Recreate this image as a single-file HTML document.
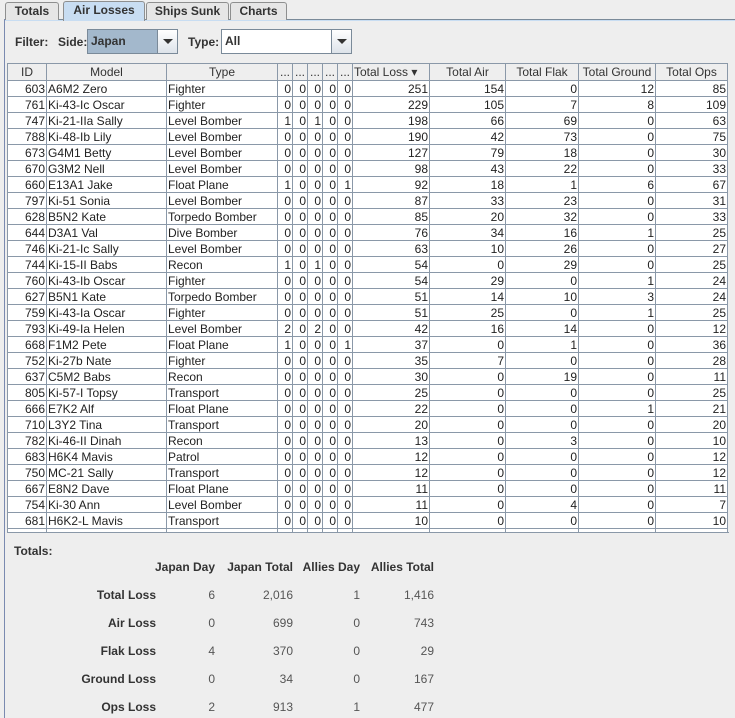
<!DOCTYPE html>
<html><head><meta charset="utf-8"><style>
*{box-sizing:border-box;margin:0;padding:0}
body{width:735px;height:718px;background:#eeeeee;font-family:"Liberation Sans",Arial,sans-serif;font-size:12px;color:#333;position:relative;overflow:hidden}
.tab{position:absolute;top:2px;height:18px;border:1px solid #8e8f8f;border-bottom:none;background:#e6e6e6;font-weight:bold;font-size:12px;line-height:16px;text-align:center;color:#333;border-radius:3px 3px 0 0}
.tab.sel{background:#c8ddf2;top:1px;height:20px}
.pline{position:absolute;left:4px;top:19px;width:731px;height:2px;border-top:1px solid #7a8a99;border-bottom:1px solid #c8ddf2}
.pleft{position:absolute;left:4px;top:19px;width:1px;height:699px;background:#7a8ab0}
.lbl{position:absolute;font-weight:bold;top:35px}
.combo{position:absolute;top:29px;height:25px;border:1px solid #7a8a99;background:#fff;font-weight:bold;line-height:23px;padding-left:3px}
.arr{position:absolute;right:0;top:0;width:20px;height:23px;border-left:1px solid #7a8a99;background:linear-gradient(#fff,#dde3ea)}
.arr:after{content:"";position:absolute;left:5px;top:9px;border-left:5px solid transparent;border-right:5px solid transparent;border-top:5px solid #333}
.wrap{position:absolute;left:7px;top:63px;width:722px;height:470px;overflow:hidden;border-bottom:1px solid #8a98a8}
table{border-collapse:collapse;table-layout:fixed;background:#fff}
td,th{border:1px solid #8a98a8;height:16px;padding:0 1px;font-weight:normal;white-space:nowrap;overflow:hidden;line-height:14px;font-size:12px;color:#222}
th{background:#eeeeee;text-align:center;height:17px;color:#333}
td.r{text-align:right}
.tot{position:absolute;font-weight:bold}
.tr{position:absolute;text-align:right;width:120px}
.tb{font-weight:bold}
.tv{color:#555}
</style></head><body>
<div class="pline"></div>
<div class="pleft"></div>
<div class="tab" style="left:5px;width:54px">Totals</div>
<div class="tab sel" style="left:63px;width:82px">Air Losses</div>
<div class="tab" style="left:146px;width:83px">Ships Sunk</div>
<div class="tab" style="left:230px;width:57px">Charts</div>
<div class="lbl" style="left:15px">Filter:</div>
<div class="lbl" style="left:58px">Side:</div>
<div class="combo" style="left:87px;width:91px;background:#a3b8cc">Japan<div class="arr"></div></div>
<div class="lbl" style="left:188px">Type:</div>
<div class="combo" style="left:221px;width:131px">All<div class="arr"></div></div>
<div class="wrap">
<table>
<colgroup><col style="width:39px"><col style="width:120px"><col style="width:111px"><col style="width:15px"><col style="width:15px"><col style="width:15px"><col style="width:15px"><col style="width:15px"><col style="width:77px"><col style="width:76px"><col style="width:73px"><col style="width:77px"><col style="width:72px"></colgroup>
<tr><th>ID</th><th>Model</th><th>Type</th><th>...</th><th>...</th><th>...</th><th>...</th><th>...</th><th style="text-align:left">Total Loss ▾</th><th>Total Air</th><th>Total Flak</th><th>Total Ground</th><th>Total Ops</th></tr>
<tr><td class="r">603</td><td>A6M2 Zero</td><td>Fighter</td><td class="r">0</td><td class="r">0</td><td class="r">0</td><td class="r">0</td><td class="r">0</td><td class="r">251</td><td class="r">154</td><td class="r">0</td><td class="r">12</td><td class="r">85</td></tr>
<tr><td class="r">761</td><td>Ki-43-Ic Oscar</td><td>Fighter</td><td class="r">0</td><td class="r">0</td><td class="r">0</td><td class="r">0</td><td class="r">0</td><td class="r">229</td><td class="r">105</td><td class="r">7</td><td class="r">8</td><td class="r">109</td></tr>
<tr><td class="r">747</td><td>Ki-21-IIa Sally</td><td>Level Bomber</td><td class="r">1</td><td class="r">0</td><td class="r">1</td><td class="r">0</td><td class="r">0</td><td class="r">198</td><td class="r">66</td><td class="r">69</td><td class="r">0</td><td class="r">63</td></tr>
<tr><td class="r">788</td><td>Ki-48-Ib Lily</td><td>Level Bomber</td><td class="r">0</td><td class="r">0</td><td class="r">0</td><td class="r">0</td><td class="r">0</td><td class="r">190</td><td class="r">42</td><td class="r">73</td><td class="r">0</td><td class="r">75</td></tr>
<tr><td class="r">673</td><td>G4M1 Betty</td><td>Level Bomber</td><td class="r">0</td><td class="r">0</td><td class="r">0</td><td class="r">0</td><td class="r">0</td><td class="r">127</td><td class="r">79</td><td class="r">18</td><td class="r">0</td><td class="r">30</td></tr>
<tr><td class="r">670</td><td>G3M2 Nell</td><td>Level Bomber</td><td class="r">0</td><td class="r">0</td><td class="r">0</td><td class="r">0</td><td class="r">0</td><td class="r">98</td><td class="r">43</td><td class="r">22</td><td class="r">0</td><td class="r">33</td></tr>
<tr><td class="r">660</td><td>E13A1 Jake</td><td>Float Plane</td><td class="r">1</td><td class="r">0</td><td class="r">0</td><td class="r">0</td><td class="r">1</td><td class="r">92</td><td class="r">18</td><td class="r">1</td><td class="r">6</td><td class="r">67</td></tr>
<tr><td class="r">797</td><td>Ki-51 Sonia</td><td>Level Bomber</td><td class="r">0</td><td class="r">0</td><td class="r">0</td><td class="r">0</td><td class="r">0</td><td class="r">87</td><td class="r">33</td><td class="r">23</td><td class="r">0</td><td class="r">31</td></tr>
<tr><td class="r">628</td><td>B5N2 Kate</td><td>Torpedo Bomber</td><td class="r">0</td><td class="r">0</td><td class="r">0</td><td class="r">0</td><td class="r">0</td><td class="r">85</td><td class="r">20</td><td class="r">32</td><td class="r">0</td><td class="r">33</td></tr>
<tr><td class="r">644</td><td>D3A1 Val</td><td>Dive Bomber</td><td class="r">0</td><td class="r">0</td><td class="r">0</td><td class="r">0</td><td class="r">0</td><td class="r">76</td><td class="r">34</td><td class="r">16</td><td class="r">1</td><td class="r">25</td></tr>
<tr><td class="r">746</td><td>Ki-21-Ic Sally</td><td>Level Bomber</td><td class="r">0</td><td class="r">0</td><td class="r">0</td><td class="r">0</td><td class="r">0</td><td class="r">63</td><td class="r">10</td><td class="r">26</td><td class="r">0</td><td class="r">27</td></tr>
<tr><td class="r">744</td><td>Ki-15-II Babs</td><td>Recon</td><td class="r">1</td><td class="r">0</td><td class="r">1</td><td class="r">0</td><td class="r">0</td><td class="r">54</td><td class="r">0</td><td class="r">29</td><td class="r">0</td><td class="r">25</td></tr>
<tr><td class="r">760</td><td>Ki-43-Ib Oscar</td><td>Fighter</td><td class="r">0</td><td class="r">0</td><td class="r">0</td><td class="r">0</td><td class="r">0</td><td class="r">54</td><td class="r">29</td><td class="r">0</td><td class="r">1</td><td class="r">24</td></tr>
<tr><td class="r">627</td><td>B5N1 Kate</td><td>Torpedo Bomber</td><td class="r">0</td><td class="r">0</td><td class="r">0</td><td class="r">0</td><td class="r">0</td><td class="r">51</td><td class="r">14</td><td class="r">10</td><td class="r">3</td><td class="r">24</td></tr>
<tr><td class="r">759</td><td>Ki-43-Ia Oscar</td><td>Fighter</td><td class="r">0</td><td class="r">0</td><td class="r">0</td><td class="r">0</td><td class="r">0</td><td class="r">51</td><td class="r">25</td><td class="r">0</td><td class="r">1</td><td class="r">25</td></tr>
<tr><td class="r">793</td><td>Ki-49-Ia Helen</td><td>Level Bomber</td><td class="r">2</td><td class="r">0</td><td class="r">2</td><td class="r">0</td><td class="r">0</td><td class="r">42</td><td class="r">16</td><td class="r">14</td><td class="r">0</td><td class="r">12</td></tr>
<tr><td class="r">668</td><td>F1M2 Pete</td><td>Float Plane</td><td class="r">1</td><td class="r">0</td><td class="r">0</td><td class="r">0</td><td class="r">1</td><td class="r">37</td><td class="r">0</td><td class="r">1</td><td class="r">0</td><td class="r">36</td></tr>
<tr><td class="r">752</td><td>Ki-27b Nate</td><td>Fighter</td><td class="r">0</td><td class="r">0</td><td class="r">0</td><td class="r">0</td><td class="r">0</td><td class="r">35</td><td class="r">7</td><td class="r">0</td><td class="r">0</td><td class="r">28</td></tr>
<tr><td class="r">637</td><td>C5M2 Babs</td><td>Recon</td><td class="r">0</td><td class="r">0</td><td class="r">0</td><td class="r">0</td><td class="r">0</td><td class="r">30</td><td class="r">0</td><td class="r">19</td><td class="r">0</td><td class="r">11</td></tr>
<tr><td class="r">805</td><td>Ki-57-I Topsy</td><td>Transport</td><td class="r">0</td><td class="r">0</td><td class="r">0</td><td class="r">0</td><td class="r">0</td><td class="r">25</td><td class="r">0</td><td class="r">0</td><td class="r">0</td><td class="r">25</td></tr>
<tr><td class="r">666</td><td>E7K2 Alf</td><td>Float Plane</td><td class="r">0</td><td class="r">0</td><td class="r">0</td><td class="r">0</td><td class="r">0</td><td class="r">22</td><td class="r">0</td><td class="r">0</td><td class="r">1</td><td class="r">21</td></tr>
<tr><td class="r">710</td><td>L3Y2 Tina</td><td>Transport</td><td class="r">0</td><td class="r">0</td><td class="r">0</td><td class="r">0</td><td class="r">0</td><td class="r">20</td><td class="r">0</td><td class="r">0</td><td class="r">0</td><td class="r">20</td></tr>
<tr><td class="r">782</td><td>Ki-46-II Dinah</td><td>Recon</td><td class="r">0</td><td class="r">0</td><td class="r">0</td><td class="r">0</td><td class="r">0</td><td class="r">13</td><td class="r">0</td><td class="r">3</td><td class="r">0</td><td class="r">10</td></tr>
<tr><td class="r">683</td><td>H6K4 Mavis</td><td>Patrol</td><td class="r">0</td><td class="r">0</td><td class="r">0</td><td class="r">0</td><td class="r">0</td><td class="r">12</td><td class="r">0</td><td class="r">0</td><td class="r">0</td><td class="r">12</td></tr>
<tr><td class="r">750</td><td>MC-21 Sally</td><td>Transport</td><td class="r">0</td><td class="r">0</td><td class="r">0</td><td class="r">0</td><td class="r">0</td><td class="r">12</td><td class="r">0</td><td class="r">0</td><td class="r">0</td><td class="r">12</td></tr>
<tr><td class="r">667</td><td>E8N2 Dave</td><td>Float Plane</td><td class="r">0</td><td class="r">0</td><td class="r">0</td><td class="r">0</td><td class="r">0</td><td class="r">11</td><td class="r">0</td><td class="r">0</td><td class="r">0</td><td class="r">11</td></tr>
<tr><td class="r">754</td><td>Ki-30 Ann</td><td>Level Bomber</td><td class="r">0</td><td class="r">0</td><td class="r">0</td><td class="r">0</td><td class="r">0</td><td class="r">11</td><td class="r">0</td><td class="r">4</td><td class="r">0</td><td class="r">7</td></tr>
<tr><td class="r">681</td><td>H6K2-L Mavis</td><td>Transport</td><td class="r">0</td><td class="r">0</td><td class="r">0</td><td class="r">0</td><td class="r">0</td><td class="r">10</td><td class="r">0</td><td class="r">0</td><td class="r">0</td><td class="r">10</td></tr>
<tr><td>&nbsp;</td><td></td><td></td><td></td><td></td><td></td><td></td><td></td><td></td><td></td><td></td><td></td><td></td></tr>
</table>
</div>
<div class="tot" style="left:14px;top:544px">Totals:</div>
<div class="tr tb" style="left:95px;top:560px">Japan Day</div>
<div class="tr tb" style="left:173px;top:560px">Japan Total</div>
<div class="tr tb" style="left:240px;top:560px">Allies Day</div>
<div class="tr tb" style="left:314px;top:560px">Allies Total</div>

<div class="tr tb" style="left:36px;top:588px">Total Loss</div>
<div class="tr tv" style="left:95px;top:588px">6</div><div class="tr tv" style="left:173px;top:588px">2,016</div><div class="tr tv" style="left:240px;top:588px">1</div><div class="tr tv" style="left:314px;top:588px">1,416</div>
<div class="tr tb" style="left:36px;top:616px">Air Loss</div>
<div class="tr tv" style="left:95px;top:616px">0</div><div class="tr tv" style="left:173px;top:616px">699</div><div class="tr tv" style="left:240px;top:616px">0</div><div class="tr tv" style="left:314px;top:616px">743</div>
<div class="tr tb" style="left:36px;top:644px">Flak Loss</div>
<div class="tr tv" style="left:95px;top:644px">4</div><div class="tr tv" style="left:173px;top:644px">370</div><div class="tr tv" style="left:240px;top:644px">0</div><div class="tr tv" style="left:314px;top:644px">29</div>
<div class="tr tb" style="left:36px;top:672px">Ground Loss</div>
<div class="tr tv" style="left:95px;top:672px">0</div><div class="tr tv" style="left:173px;top:672px">34</div><div class="tr tv" style="left:240px;top:672px">0</div><div class="tr tv" style="left:314px;top:672px">167</div>
<div class="tr tb" style="left:36px;top:700px">Ops Loss</div>
<div class="tr tv" style="left:95px;top:700px">2</div><div class="tr tv" style="left:173px;top:700px">913</div><div class="tr tv" style="left:240px;top:700px">1</div><div class="tr tv" style="left:314px;top:700px">477</div>
</body></html>
